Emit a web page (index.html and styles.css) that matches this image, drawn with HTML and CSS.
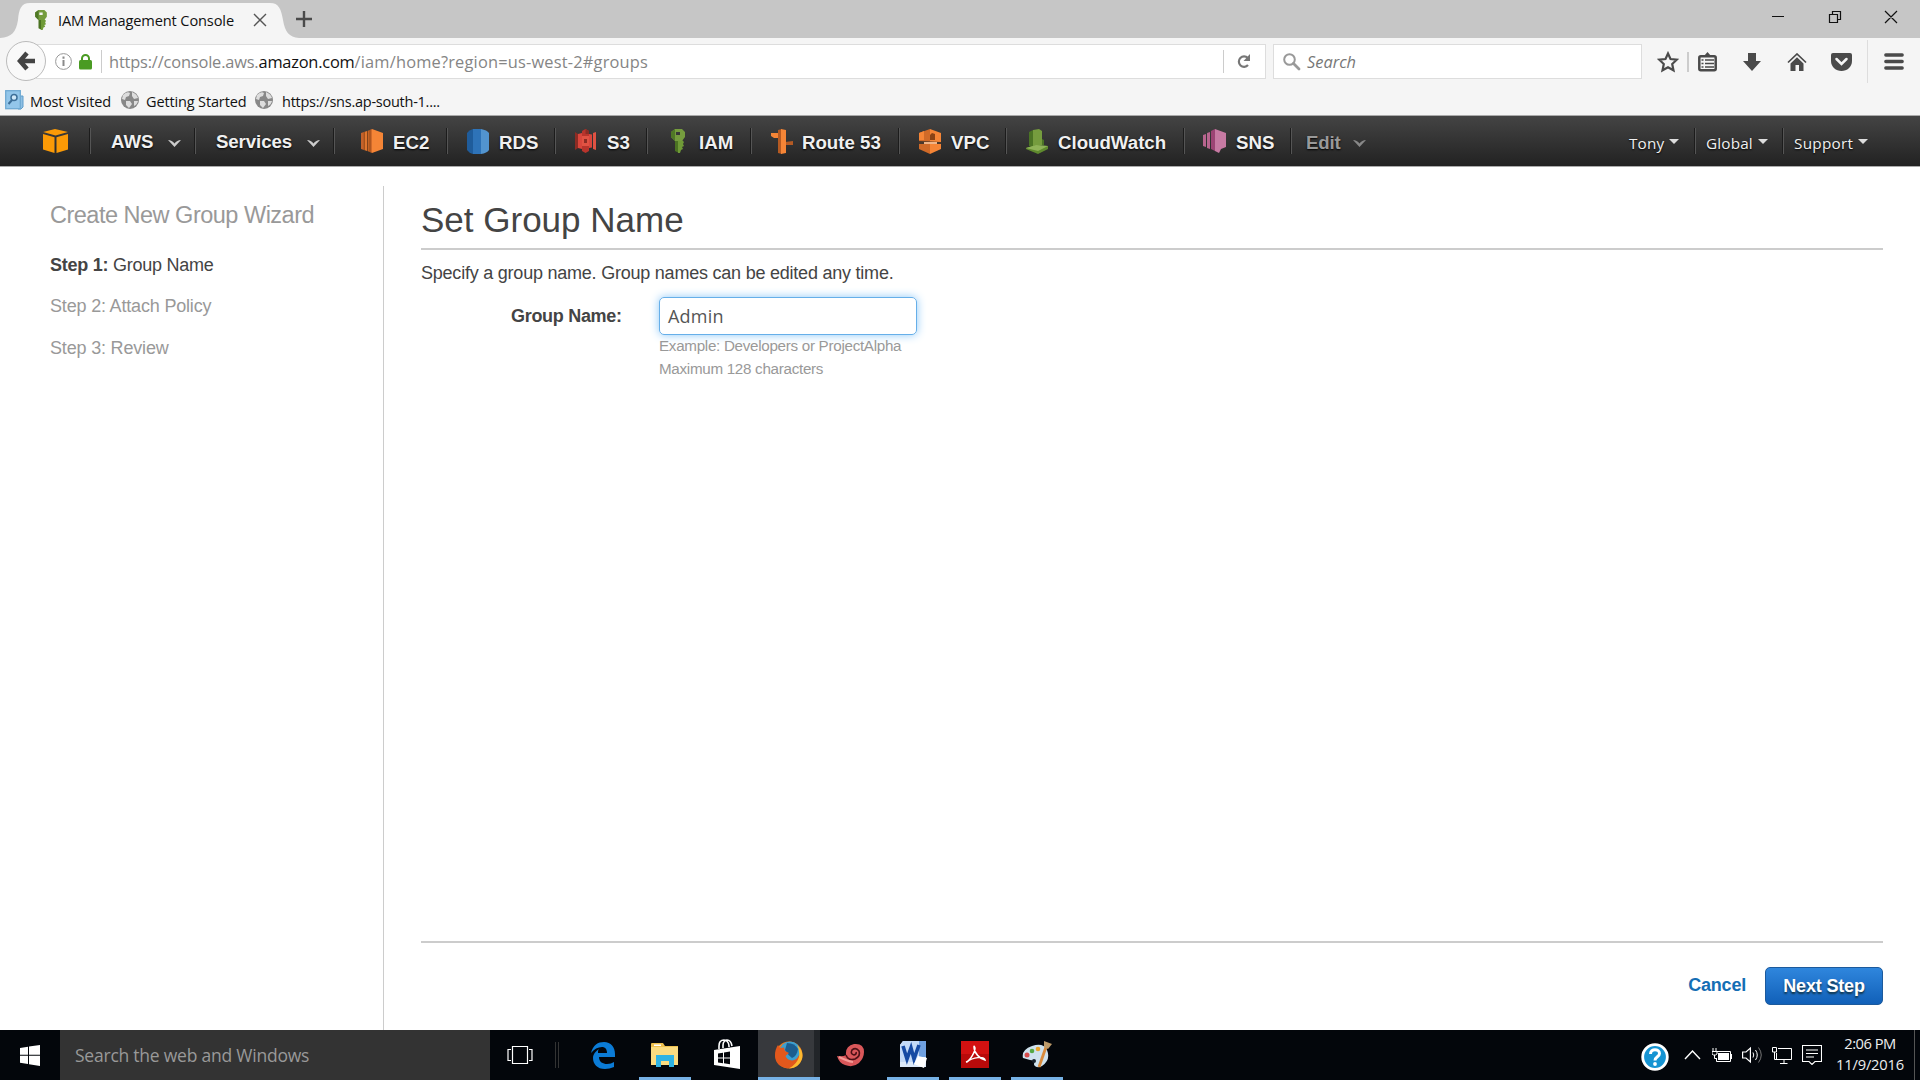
FILE: index.html
```html
<!DOCTYPE html>
<html lang="en"><head><meta charset="utf-8"><title>IAM Management Console</title><link rel="stylesheet" href="styles.css"></head>
<body>
<div class="tabs">
<svg class="tabshape" width="300" height="38" viewBox="0 0 300 38"><path fill="#f5f5f5" d="M0 38C12 37 16 32 18 20C19 9 21 3 30 3H270C279 3 281 9 283 20C285 32 289 37 299 38Z"/></svg>
<svg class="tabkey" width="14" height="20" viewBox="0 0 14 24"><use href="#key"/></svg>
<span class="tabtitle">IAM Management Console</span>
<svg class="tabclose" width="14" height="14" viewBox="0 0 14 14"><path d="M1 1L13 13M13 1L1 13" stroke="#555" stroke-width="1.4"/></svg>
<svg class="tabadd" width="16" height="16" viewBox="0 0 16 16"><path d="M8 0V16M0 8H16" stroke="#4a4a4a" stroke-width="2.4"/></svg>
<svg class="winctl" width="126" height="14" viewBox="0 0 126 14"><path d="M0 6.500H12M57.500 4.500h8v8h-8zM60.500 4V1.500h8v8H66M113 1L125 13M125 1L113 13" fill="none" stroke="#111" stroke-width="1.200"/></svg>
</div>
<div class="toolbar">
<div class="back"><svg width="18" height="20" viewBox="0 0 18 20"><path d="M10 2L3 10L10 18M3 10H18" fill="none" stroke="#444" stroke-width="4.500"/></svg></div>
<div class="urlbar">
<svg class="info" width="17" height="17" viewBox="0 0 17 17"><circle cx="8.500" cy="8.500" r="7.900" fill="none" stroke="#999"/><path d="M8.500 3.500v2.300M8.500 7v6" stroke="#8a8a8a" stroke-width="2"/></svg>
<svg class="lock" width="13" height="16" viewBox="0 0 13 16"><path d="M3 8V4.500a3.500 3.500 0 0 1 7 0V8" fill="none" stroke="#4a9b23" stroke-width="2"/><rect y="6" width="13" height="9.500" rx="1.500" fill="#4a9b23"/></svg>
<span class="urldiv"></span>
<span class="url"><span class="scheme">https://console.aws.</span><span class="host">amazon.com</span><span class="path">/iam/home?region=us-west-2#groups</span></span>
<span class="reload"><svg width="14" height="15" viewBox="0 0 14 15"><path d="M11 11A5.200 5.200 0 1 1 10.800 4" fill="none" stroke="#777" stroke-width="2.200"/><path d="M13 0V7H6.500Z" fill="#777"/></svg></span>
</div>
<div class="searchbox"><svg width="18" height="18" viewBox="0 0 18 18"><circle cx="6.500" cy="6.500" r="5.300" fill="none" stroke="#999" stroke-width="2"/><path d="M10.500 10.500L16 16" stroke="#999" stroke-width="2.800" stroke-linecap="round"/></svg><span>Search</span></div>
<div class="tools">
<svg width="22" height="22" viewBox="0 0 22 22"><path d="M11 2.500L13.500 8L19.700 8.700L15.200 13L16.500 19.300L11 16.200L5.500 19.300L6.800 13L2.300 8.700L8.500 8Z" fill="none" stroke="#4a4a4a" stroke-width="2.200"/></svg>
<i class="bar"></i>
<svg class="clip" width="19" height="20" viewBox="0 0 19 20"><path d="M5.500 4.500L9.500 0L13.500 4.500Z" fill="#4a4a4a"/><rect x="1.300" y="4.300" width="16.400" height="14" rx="1.500" fill="none" stroke="#4a4a4a" stroke-width="2.500"/><path d="M3.500 8h2M7 8h9M3.500 11.500h2M7 11.500h9M3.500 15h2M7 15h9" stroke="#4a4a4a" stroke-width="1.500"/></svg>
<svg class="down" width="18" height="18" viewBox="0 0 18 18"><path d="M5 0h8v8h5L9 18L0 8h5z" fill="#4a4a4a"/></svg>
<svg class="home" width="20" height="18" viewBox="0 0 20 18"><path d="M1 9.500L10 1L19 9.500" fill="none" stroke="#4a4a4a" stroke-width="1.700"/><path d="M3.500 10.500L10 4.300L16.500 10.500V18H12V12H8.500V18H3.500Z" fill="#4a4a4a"/></svg>
<svg class="pocket" width="21" height="18" viewBox="0 0 21 18"><path d="M2 0H19Q21 0 21 2V8C21 14 16 18 10.500 18S0 14 0 8V2Q0 0 2 0Z" fill="#4a4a4a"/><path d="M5.500 6L10.500 11L15.500 6" fill="none" stroke="#f5f5f5" stroke-width="2.500" stroke-linecap="round"/></svg>
<i class="bar2"></i>
<svg class="menu" width="20" height="17" viewBox="0 0 20 17"><path d="M1.800 2H18.200M1.800 8.500H18.200M1.800 15H18.200" stroke="#4a4a4a" stroke-width="3.300" stroke-linecap="round"/></svg>
</div>
</div>
<div class="bookmarks">
<svg width="19" height="20" viewBox="0 0 19 20"><path d="M13 6h5v11l-2 2h-3z" fill="#8fc0e4" stroke="#5e9dcb"/><rect x=".7" y=".7" width="14.600" height="18" fill="#93c6ea" stroke="#6fa9d2" stroke-width="1.300"/><circle cx="9" cy="7.500" r="3" fill="#cfe8f8" stroke="#3d6f98" stroke-width="1.500"/><path d="M7 10L3.500 14" stroke="#3d6f98" stroke-width="2"/></svg><span class="b1">Most Visited</span>
<svg width="18" height="18" viewBox="0 0 18 18"><use href="#globe"/></svg><span class="b2">Getting Started</span>
<svg width="18" height="18" viewBox="0 0 18 18"><use href="#globe"/></svg><span class="b3">https://sns.ap-south-1....</span>
</div>
<nav class="nav">
<div class="cell logo"><svg width="25" height="24" viewBox="0 0 25 24"><path d="M0 3L12 0L25 3L12.500 6.500ZM0 5L11.500 8.300V24L0 20.500ZM25 5L13.500 8.300V24L25 20.500Z" fill="#fb9a06"/></svg></div>
<div class="cell aws"><span>AWS</span><svg width="13" height="8" viewBox="0 0 13 8"><path d="M0 1Q4 1 6.500 4.500Q9 1 13 1L6.500 8Z" fill="#ccc"/></svg></div>
<div class="cell services"><span>Services</span><svg width="13" height="8" viewBox="0 0 13 8"><path d="M0 1Q4 1 6.500 4.500Q9 1 13 1L6.500 8Z" fill="#ccc"/></svg></div>
<div class="cell ec2"><svg width="22" height="24" viewBox="0 0 22 24"><path d="M0 4L3 3V21L0 20Z" fill="#c4622a"/><path d="M3 3L6 2V22L3 21Z" fill="#e0762e"/><path d="M6.500 2L11 0V24L6.500 22Z" fill="#d06a2a"/><path d="M11 0L22 4V20L11 24Z" fill="#f58536"/><path d="M3.300 3V21M6.700 2V22M9 1V23" stroke="#803c12" stroke-width=".8"/></svg><span>EC2</span></div>
<div class="cell rds"><svg width="22" height="25" viewBox="0 0 22 25"><path d="M0 4Q2 1 6 0V25Q2 24 0 21Z" fill="#1f5c9b"/><path d="M6 0H14V25H6Z" fill="#2e73b8"/><path d="M14 0Q20 1 22 4V21Q20 24 14 25Z" fill="#5294cf"/></svg><span>RDS</span></div>
<div class="cell s3"><svg width="21" height="24" viewBox="0 0 21 24"><path d="M0 3L3 5V19L0 21Z" fill="#8c2c24"/><path d="M3 5L7 4V20L3 19Z" fill="#d9463c"/><path d="M7 2L10.500 0L14 2V22L10.500 24L7 22Z" fill="#b8342c"/><path d="M14 5L17 5.500V18.500L14 19Z" fill="#d9463c"/><path d="M18 4L21 3V21L18 20Z" fill="#e05243"/><path d="M7 7H14V17H7Z" fill="#e05243"/><path d="M9 10h3v4H9zM10.500 0L14 2V5H10.500Z" fill="#8c2c24"/></svg><span>S3</span></div>
<div class="cell iam"><svg width="14" height="24" viewBox="0 0 14 24"><g id="key"><path d="M4 11H8V24L4 22Z" fill="#4b7222"/><path d="M8 11h3l2 2-1 2 1 2-2 1 1 2-2 1-1 3H7V11z" fill="#6f9a37"/><path fill-rule="evenodd" d="M4 0H11L14 3V8L11 12H4L0 8V3ZM5 3V6H9V3Z" fill="#759c3e"/><path d="M0 3L4 0V12L0 8Z" fill="#4f7826"/></g></svg><span>IAM</span></div>
<div class="cell r53"><svg width="22" height="25" viewBox="0 0 22 25"><path d="M0 4H7V9H3L0 7Z" fill="#f58536"/><path d="M14 13L22 12V16H14Z" fill="#b35a24"/><path d="M7 1L11 0V25L7 24Z" fill="#b55a22"/><path d="M10 0L15 1V24L10 25Z" fill="#f58536"/></svg><span>Route 53</span></div>
<div class="cell vpc"><svg width="22" height="25" viewBox="0 0 22 25"><path d="M0 4L11 0V25L0 20Z" fill="#d06a28"/><path d="M11 0L22 4V20L11 25Z" fill="#f58536"/><path d="M0 12L22 13V15H0Z" fill="#49372b"/><path d="M5 13H18V15H5Z" fill="#f0b487"/><path d="M13 4L16 5V11H11V6Z" fill="#8a4315"/><path d="M0 4L5 2V11H0Z" fill="#f58536"/></svg><span>VPC</span></div>
<div class="cell cw"><svg width="22" height="25" viewBox="0 0 22 25"><path d="M3 3L7 1V18L3 17Z" fill="#4b7425"/><path d="M7 1L13 0L16 2V16L7 18Z" fill="#759c3e"/><path d="M16 10L18 11V16H16Z" fill="#4b7425"/><path d="M0 19L10 16L22 17V20L12 25L0 20Z" fill="#5f8a2e"/><path d="M0 19L10 16L22 17L12 22Z" fill="#8fb358"/></svg><span>CloudWatch</span></div>
<div class="cell sns"><svg width="23" height="24" viewBox="0 0 23 24"><path d="M0 6L3 5V18L0 17ZM4 4L7 3V20L4 19Z" fill="#b9658f"/><path d="M8 2L12 0V22L8 20Z" fill="#9c4474"/><path d="M12 0L23 4V18L18 20L16 24L12 22Z" fill="#c77aa3"/></svg><span>SNS</span></div>
<div class="cell edit"><span>Edit</span><svg width="13" height="8" viewBox="0 0 13 8"><path d="M0 1Q4 1 6.500 4.500Q9 1 13 1L6.500 8Z" fill="#888"/></svg></div>
<div class="cell right tony"><span>Tony</span><b></b></div>
<div class="cell right global"><span>Global</span><b></b></div>
<div class="cell right support"><span>Support</span><b></b></div>
</nav>
<main>
<aside><h2>Create New Group Wizard</h2><p class="cur"><b>Step 1:</b> Group Name</p><p>Step 2: Attach Policy</p><p>Step 3: Review</p></aside>
<section>
<h1>Set Group Name</h1>
<p class="intro">Specify a group name. Group names can be edited any time.</p>
<div class="row"><label>Group Name:</label><div><div class="field">Admin</div><p class="hint">Example: Developers or ProjectAlpha</p><p class="hint">Maximum 128 characters</p></div></div>
<footer><a>Cancel</a><button>Next Step</button></footer>
</section>
</main>
<div class="taskbar">
<div class="start"><svg width="20" height="21" viewBox="0 0 20 21"><path d="M0 3L8 1.700V9.800H0ZM9 1.500L20 0V9.800H9ZM0 10.800H8V19L0 17.700ZM9 10.800H20V21L9 19.300Z" fill="#fff"/></svg></div>
<div class="tsearch">Search the web and Windows</div>
<div class="tview"><svg width="26" height="20" viewBox="0 0 26 20"><path d="M5.500 1.500h15v17h-15zM4 4.500h-3v11h3M22 4.500h3v11h-3" fill="none" stroke="#fff" stroke-width="1.200"/></svg></div>
<div class="grip"></div>
<div class="app"><svg width="26" height="28" viewBox="0 0 26 28"><path d="M1 12C3 4 8 1 14 1C21 1 25 6 25 13V16H9C9 21 13 23 17 23C20 23 22 22 24 21V26C21 27 18 28 15 28C7 28 3 23 3 17C3 13 6 10 9 8C8 9 8 10 8 12H17C17 8 15 6 12 6C8 6 4 8 1 12Z" fill="#0b7bd6"/></svg></div>
<div class="app open"><svg width="28" height="24" viewBox="0 0 28 24"><path d="M0 1Q0 0 1 0H12L14 3H27V22H0Z" fill="#eec04e"/><path d="M3 1.500H10V3H3Z" fill="#fff"/><path d="M0 4H27V22H0Z" fill="#fbdc80"/><path d="M5 12H23V24H18V18H10V24H5Z" fill="#2fb3e3"/></svg></div>
<div class="app"><svg width="27" height="31" viewBox="0 0 27 31"><path d="M5 10V7C5 2 8 1 10 1S15 3 15 7V8M9 9V6C9 2 12 1 13 1Q17 1 18 7" fill="none" stroke="#fff" stroke-width="1.600"/><path d="M0 11L26 7V30L0 26Z" fill="#fff"/><path d="M4 14.500L9 13.700V18.500H4ZM10 13.500L16 12.500V18.500H10ZM4 19.500H9V24.200L4 23.500ZM10 19.500H16V25.200L10 24.300Z" fill="#05070c"/></svg></div>
<div class="app open active"><svg width="28" height="28" viewBox="0 0 28 28"><circle cx="14" cy="14" r="13.500" fill="#ee7a1e"/><circle cx="15" cy="11" r="10.500" fill="#3b9fd0"/><path d="M12 2Q20 2 23 8Q22 15 17 17Q13 14 10 9Z" fill="#1c5d8f"/><path d="M0 15Q0 8 3 4L5 7L9 6.500L10 10L14 12L10.500 15Q12 19 17 19.500Q22 19 24 14Q25 22 18 26Q10 29 4 24Q0 20 0 15Z" fill="#e2581c"/><path d="M22 4Q29 10 27 18Q24 27 14 27.500Q22 23 24 16Q25 9 22 4Z" fill="#fdb92f"/></svg></div>
<div class="app"><svg width="28" height="24" viewBox="0 0 28 24"><path d="M0 13Q6 14 9 12Q8 3 17 1Q27 0 27 9Q27 15 22 20Q16 25 8 22Q2 20 0 13Z" fill="#d9575a"/><path d="M9 12Q11 18 18 16Q24 13 22 8Q19 4 15 7Q13 11 17 12Q20 11 19 9" fill="none" stroke="#4b1015" stroke-width="1.600"/><path d="M2 14Q10 18 16 19" stroke="#f49a96" stroke-width="2" fill="none"/></svg></div>
<div class="app open"><svg width="28" height="27" viewBox="0 0 28 27"><path d="M4 0H27V26H1V4Z" fill="#dce9fa"/><path d="M4 0H20V21H1V4Z" fill="#c4daf7"/><path d="M27 0V16H20V0Z" fill="#6fa0e0"/><path d="M4 5L8 18L12 7L15 18L20 4" fill="none" stroke="#164aa3" stroke-width="3.600"/><path d="M19 15L28 17L25 27L15 23Z" fill="#fff"/></svg></div>
<div class="app open"><svg width="28" height="27" viewBox="0 0 28 27"><rect width="28" height="27" fill="#b90a0a"/><rect y="0" width="28" height="13" fill="#d31111"/><path d="M5 21C9 20 14 11 14 7Q13 4 13 6C13 12 19 18 24 19C23 15 12 16 6 21Z" fill="none" stroke="#fff" stroke-width="1.500"/></svg></div>
<div class="app open"><svg width="30" height="29" viewBox="0 0 30 29"><path d="M10 6Q21 2 25 10Q29 20 20 26Q15 29 12 25Q13 20 8 20L1 18Q-1 10 10 6Z" fill="#cfe2ee"/><circle cx="5" cy="15" r="2.500" fill="#d64c4c"/><circle cx="10" cy="11" r="2.300" fill="#55a845"/><circle cx="16" cy="9" r="2.300" fill="#eaa42e"/><circle cx="12" cy="21" r="2" fill="#17202a"/><path d="M17 27L24 7" stroke="#d98b3d" stroke-width="2.800"/><path d="M22 1L30 4L26 9L22 7Z" fill="#bd9a69"/></svg></div>
<div class="tray">
<svg width="30" height="30" viewBox="0 0 30 30"><circle cx="15" cy="15" r="12.300" fill="#1593d2" stroke="#fff" stroke-width="2.800"/><path d="M10.500 12C10.500 6 19.500 6.500 19.500 11.500C19.500 15 15 14.500 15 18.500" fill="none" stroke="#fff" stroke-width="3"/><circle cx="15" cy="22" r="1.900" fill="#fff"/></svg>
<svg class="up" width="17" height="10" viewBox="0 0 17 10"><path d="M1 9L8.500 1L16 9" fill="none" stroke="#fff" stroke-width="1.400"/></svg>
<svg class="bat" width="20" height="14" viewBox="0 0 20 14"><path d="M5 3.500H18.500V13.500H4.500V10" fill="none" stroke="#fff"/><path d="M6 5H17V12H6ZM19 6h1v5h-1z" fill="#fff"/><path d="M1 0V3M4 0V3M0 3.500H5V6L3.500 7H1.500L0 6ZM2.500 7V10.500H5" fill="none" stroke="#fff"/></svg>
<svg class="vol" width="21" height="18" viewBox="0 0 21 18"><path d="M.6 6H4L8.400 2V16L4 12H.6Z" fill="none" stroke="#fff" stroke-width="1.200"/><path d="M11 6.500Q12.500 9 11 11.500M13.500 4Q17 9 13.500 14" fill="none" stroke="#fff"/><path d="M16.500 1.500Q22 9 16.500 16.500" fill="none" stroke="#777"/></svg>
<svg class="net" width="20" height="17" viewBox="0 0 20 17"><path d="M6 1.500H19.500V12.500H4.500V6M12 12.500V16M8 16.500H15.500M.5.500H4.500V5H.5ZM2.500 5V12.500H5" fill="none" stroke="#fff"/></svg>
<svg class="act" width="20" height="20" viewBox="0 0 20 20"><path d="M.5.500H19.500V16.500H13L10 19.500L7 16.500H.5ZM4 5H16M4 8.500H16M4 12H12" fill="none" stroke="#fff" stroke-width="1.100"/></svg>
<div class="clock"><span class="time">2:06 PM</span><span class="date">11/9/2016</span></div><i></i>
</div>
</div>
<svg width="0" height="0"><defs><g id="globe"><circle cx="9" cy="9" r="9" fill="#888"/><path d="M2 4Q6 0 9 2L8 5L5 6L4 9L1 8ZM11 1Q16 3 17 7L13 8L11 5ZM5 10L9 10L11 13L8 17L5 14ZM13 10L17 10Q16 14 13 15Z" fill="#ddd"/></g></defs></svg>
</body></html>
```
FILE: styles.css
```css
*{box-sizing:border-box}
body{margin:0;width:1920px;height:1080px;overflow:hidden;background:#fff;font-family:"Open Sans","Noto Sans",sans-serif;color:#444;display:flex;flex-direction:column}
h1,h2,p{margin:0;font-weight:400;white-space:nowrap}
svg{flex:none;display:block}
span{white-space:nowrap}
.tabs{height:38px;background:#c6c6c6;display:flex;align-items:flex-start;position:relative;flex:none}
.tabshape{position:absolute;left:0;top:0}
.tabkey{margin:10px 0 0 34px;position:relative}
.tabtitle{margin-left:10px;width:176px;position:relative;font-size:14.600px;letter-spacing:-.13px;line-height:22px;margin-top:9px;color:#111}
.tabclose{margin:13px 0 0 19px;position:relative}
.tabadd{margin:11px 0 0 29px}
.winctl{margin:10px 22px 0 auto}
.toolbar{height:47px;background:#f5f5f5;display:flex;align-items:flex-start;flex:none}
.back{width:40px;height:40px;margin:3px 0 0 6px;border:1px solid #bbb;border-radius:50%;background:#f9f9f9;display:flex;align-items:center;justify-content:center;position:relative;z-index:1}
.urlbar{height:35px;margin:6px 0 0 -10px;width:1230px;background:#fff;border:1px solid #ddd;display:flex;align-items:center}
.info{margin-left:18px}.lock{margin-left:7px}
.urldiv{width:1px;height:23px;background:#ccc;margin-left:9px}
.url{margin-left:7px;font-size:16.400px;line-height:33px;color:#858585}
.scheme{letter-spacing:-.17px}
.host{color:#111;letter-spacing:-.22px}
.path{letter-spacing:.19px}
.reload{margin-left:auto;width:42px;height:23px;border-left:1px solid #ccc;padding:4px 0 0 13px}
.searchbox{height:35px;width:369px;margin:6px 0 0 7px;background:#fff;border:1px solid #ddd;display:flex;align-items:center;font-size:16.400px;font-style:italic;color:#777;padding-left:9px;gap:6px}
.tools{display:flex;align-items:center;margin:6px 0 0 15px;height:35px}
.bar{width:2px;height:20px;background:#ccc;margin-left:8px}
.clip{margin-left:9px}.down{margin-left:26px}.home{margin-left:26px}.pocket{margin-left:24px}
.bar2{width:1px;height:43px;background:#ddd;margin-left:15px}.menu{margin-left:16px}
.bookmarks{height:30px;background:#f5f5f5;display:flex;align-items:center;flex:none;font-size:14.500px;letter-spacing:-.14px;color:#111;padding-left:5px}
.bookmarks span{margin-left:6px;padding-top:2px}
.bookmarks .b1{width:82px}.bookmarks .b2{width:101px;margin-left:7px}.bookmarks .b3{margin-left:9px;letter-spacing:-.25px}
.bookmarks span+svg{margin-left:9px}
.bookmarks .b2+svg{margin-left:8px}
.nav{height:52px;flex:none;background:linear-gradient(#444,#222);border-top:1px solid #aaa;border-bottom:1px solid #aaa;display:flex;align-items:center;font:700 18.670px "Liberation Sans",sans-serif;color:#f0f0f0;text-shadow:0 1px 2px #000}
.cell{height:26px;display:flex;align-items:center;border-right:1px solid #555;box-shadow:-1px 0 #1c1c1c inset;flex:none}
.cell span{padding-top:3px}
.logo{width:91px;padding-left:43px}
.aws{width:105px;padding-left:20px}.aws svg{margin-left:14px}
.aws span,.services span{padding-top:1px}
.services{width:139px;padding-left:20px;letter-spacing:-.1px}.services svg{margin-left:15px}
.aws svg,.services svg,.edit svg{margin-top:3px}
.ec2{width:113px;padding-left:26px;gap:10px}
.rds{width:108px;padding-left:19px;gap:10px}
.s3{width:92px;padding-left:19px;gap:11px}
.iam{width:104px;padding-left:23px;gap:14px}
.r53{width:148px;padding-left:19px;gap:9px}
.vpc{width:107px;padding-left:19px;gap:10px}
.cw{width:178px;padding-left:19px;gap:10px}
.sns{width:107px;padding-left:18px;gap:10px}
.edit{padding-left:14px;border:0;box-shadow:none;color:#999;letter-spacing:-.2px}.edit svg{margin-left:13px}
.right{font:400 15.300px "Open Sans",sans-serif;letter-spacing:.15px}
.right span{padding-top:4px}
.tony{width:68px;margin-left:auto;padding-left:1px}
.global{width:88px;padding-left:10px}
.support{width:136px;padding-left:10px;border:0;box-shadow:none;letter-spacing:.25px}
.right b{border:5.500px solid transparent;border-top-color:#ddd;border-bottom:0;margin:1px 0 0 5px}
main{flex:1;display:flex;padding-top:19px;font-family:"Liberation Sans",sans-serif}
aside{width:384px;border-right:1px solid #ccc;padding:14px 0 0 50px;color:#999}
h2{font-size:23.500px;line-height:30px;margin-bottom:15px;letter-spacing:-.5px}
aside p{font-size:18px;line-height:41.400px;letter-spacing:-.18px}
aside .cur{color:#444;letter-spacing:-.25px}
section{width:1462px;margin-left:37px;display:flex;flex-direction:column}
h1{font-size:35px;line-height:44px;padding-top:12px;height:64px;border-bottom:2px solid #ccc}
.intro{font-size:18px;line-height:24px;margin-top:11px;letter-spacing:-.225px}
.row{display:flex;margin-top:12px}
label{width:238px;padding-left:90px;font-weight:700;font-size:18px;line-height:38px;letter-spacing:-.3px}
.field{width:258px;height:38px;border:1px solid #66afe9;border-radius:5px;box-shadow:0 0 10px #8cc8f8;padding-left:8px;font:18px/37px "Open Sans",sans-serif;color:#555;letter-spacing:.2px}
.hint{font-size:15.200px;line-height:23px;color:#999;letter-spacing:-.29px;position:relative;top:-1px}
footer{margin-top:auto;height:89px;border-top:2px solid #ccc;display:flex;justify-content:flex-end;padding-top:24px}
a{color:#146eb4;font-weight:700;font-size:18px;line-height:37px;margin-right:19px;letter-spacing:-.2px}
button{width:118px;height:38px;border:1px solid #1c5a9c;border-radius:5px;background:linear-gradient(#2f86dd,#1160b8);color:#fff;font:700 18px "Liberation Sans",sans-serif;letter-spacing:-.17px;text-shadow:0 2px 2px #134;padding:0}
.taskbar{height:50px;background:#03060b;display:flex;flex:none}
.start{width:60px;padding:15px 0 0 20px}
.tsearch{width:430px;background:#333;color:#999;font-size:17.500px;line-height:50px;padding-left:15px;letter-spacing:-.23px}
.tview{width:65px;padding:15px 0 0 17px}
.grip{width:4px;height:26px;margin-top:12px;border:1px solid #333;border-width:0 1px}
.app{width:52px;margin-right:10px;display:flex;align-items:center;justify-content:center;border-bottom:3px solid transparent;flex:none}
.app svg{margin-top:2px}
.grip+.app{margin-left:18px}
.open{border-color:#76b1e5}
.active{width:62px;margin:0 5px 0 -5px;background:linear-gradient(90deg,#37393d 56px,#222529 56px)}
.tray{margin-left:auto;display:flex;align-items:flex-start;height:50px}
.tray>svg:first-child{margin-top:12px}
.up{margin:20px 0 0 14px}.bat{margin:18px 0 0 11px}.vol{margin:16px 0 0 10px}.net{margin:17px 0 0 9px}.act{margin:15px 0 0 10px}
.clock{width:92px;display:flex;flex-direction:column;align-items:center;font-size:14.700px;line-height:21px;padding-top:3px;color:#eee;padding-left:4px}
.time{letter-spacing:-.5px}.date{letter-spacing:-.2px}
.tray i{width:6px;height:50px;border-left:1px solid #555}
```
